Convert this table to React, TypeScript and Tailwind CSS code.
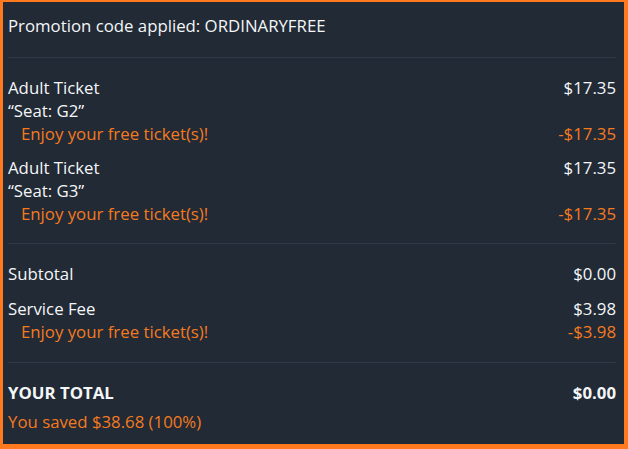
const font = { fontFamily: '"Source Sans Pro", "Open Sans", "Liberation Sans", sans-serif' }

const Row = ({ label, amount, bold }: { label: string; amount?: string; bold?: boolean }) => (
  <div className={`flex justify-between h-[23px] leading-[23px] text-[#f4f6f8] ${bold ? "font-bold" : ""}`}>
    <span>{label}</span>
    {amount && <span>{amount}</span>}
  </div>
)

const Discount = ({ amount }: { amount: string }) => (
  <div className="flex justify-between h-[23px] leading-[23px] text-[#f47a20]">
    <span className="pl-[13px]">Enjoy your free ticket(s)!</span>
    <span>{amount}</span>
  </div>
)

export default function App() {
  const tickets = [
    { name: "Adult Ticket", seat: "\u201cSeat: G2\u201d", price: "$17.35" },
    { name: "Adult Ticket", seat: "\u201cSeat: G3\u201d", price: "$17.35" },
  ]

  return (
    <div className="w-[628px] h-[449px] bg-[#ff7a1e] pt-[2px] pl-[3px] pr-[4px] pb-[5px]" style={font}>
      <div className="h-full bg-[#212a35] pl-[5px] pr-[8px] text-[16.8px]">
        {/* Promo */}
        <div className="pt-3 pb-5 border-b border-[#2f3a47]">
          <div className="h-[23px] leading-[23px] text-[#f4f6f8]">Promotion code applied: ORDINARYFREE</div>
        </div>

        {/* Tickets */}
        <div className="pt-[18px] pb-[18px] border-b border-[#2f3a47] space-y-[11px]">
          {tickets.map((t, i) => (
            <div key={i}>
              <Row label={t.name} amount={t.price} />
              <Row label={t.seat} />
              <Discount amount={"-" + t.price} />
            </div>
          ))}
        </div>

        {/* Fees */}
        <div className="pt-[18px] pb-[19px] border-b border-[#2f3a47] space-y-[12px]">
          <Row label="Subtotal" amount="$0.00" />
          <div>
            <Row label="Service Fee" amount="$3.98" />
            <Discount amount="-$3.98" />
          </div>
        </div>

        {/* Total */}
        <div className="pt-[18px]">
          <Row label="YOUR TOTAL" amount="$0.00" bold />
          <div className="mt-[6px] h-[23px] leading-[23px] text-[#f47a20]">You saved $38.68 (100%)</div>
        </div>
      </div>
    </div>
  )
}
